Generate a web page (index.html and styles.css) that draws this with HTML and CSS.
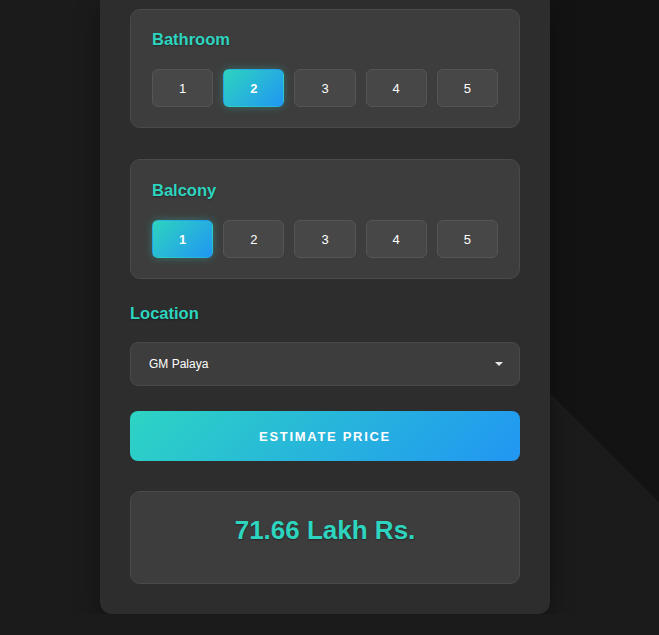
FILE: index.html
```html
<!DOCTYPE html>
<html lang="en">
<head>
<meta charset="utf-8">
<title>Price Estimator</title>
<link rel="stylesheet" href="styles.css">
</head>
<body>
<main class="card">
  <section class="group-box gap-lg">
    <h3 class="label">Bathroom</h3>
    <div class="options">
      <button class="opt">1</button>
      <button class="opt active">2</button>
      <button class="opt">3</button>
      <button class="opt">4</button>
      <button class="opt">5</button>
    </div>
  </section>
  <section class="group-box group-second gap-md">
    <h3 class="label">Balcony</h3>
    <div class="options">
      <button class="opt active">1</button>
      <button class="opt">2</button>
      <button class="opt">3</button>
      <button class="opt">4</button>
      <button class="opt">5</button>
    </div>
  </section>
  <section class="location">
    <h3 class="label">Location</h3>
    <div class="select-wrap">
      <div class="select">GM Palaya</div>
      <span class="caret"></span>
    </div>
  </section>
  <button class="estimate">ESTIMATE PRICE</button>
  <div class="result">
    <h2 class="price">71.66 Lakh Rs.</h2>
  </div>
</main>
</body>
</html>
```

FILE: styles.css
```css
html {
  height: 100%;
  background: linear-gradient(45deg, #1b1b1b 61.2%, #131313 61.2%);
}
body {
  margin: 0;
  font-family: "Liberation Sans", Arial, sans-serif;
  color: #fff;
}
.card {
  width: 450px;
  box-sizing: border-box;
  margin-left: 100px;
  padding: 9px 30px 30px;
  background: #2d2d2d;
  border-radius: 0 0 12px 12px;
  box-shadow: 0 8px 24px rgba(0, 0, 0, 0.35);
  display: flex;
  flex-direction: column;
}
.group-box {
  background: #3d3d3d;
  border: 1px solid #4a4a4a;
  border-radius: 10px;
  padding: 20px 21px;
}
.group-second {
  padding-top: 21px;
}
.gap-lg { margin-bottom: 31px; }
.gap-md { margin-bottom: 25px; }
.label {
  margin: 0 0 20px;
  font-size: 16.5px;
  font-weight: 700;
  line-height: 19px;
  color: #2dd4bf;
  text-shadow: 0 1px 2px rgba(0, 0, 0, 0.35);
}
.options {
  display: flex;
  gap: 10px;
}
.opt {
  flex: 1;
  height: 38px;
  padding: 0;
  background: #474747;
  border: 1px solid #555;
  border-radius: 6px;
  color: #fff;
  font-family: "Liberation Sans", Arial, sans-serif;
  font-size: 13px;
  font-weight: 400;
}
.opt.active {
  background: linear-gradient(135deg, #2dd4bf, #2196f3);
  border-color: transparent;
  font-weight: 700;
  box-shadow: 0 0 8px rgba(45, 212, 191, 0.35);
}
.location .label {
  margin-bottom: 19px;
}
.select-wrap {
  position: relative;
  margin-bottom: 25px;
}
.select {
  height: 44px;
  box-sizing: border-box;
  padding: 0 18px;
  display: flex;
  align-items: center;
  background: #3d3d3d;
  border: 1px solid #4a4a4a;
  border-radius: 8px;
  font-size: 12px;
  color: #fff;
}
.caret {
  position: absolute;
  right: 17px;
  top: 20px;
  width: 0;
  height: 0;
  border-left: 4px solid transparent;
  border-right: 4px solid transparent;
  border-top: 4px solid #e6e6e6;
}
.estimate {
  height: 50px;
  margin-bottom: 30px;
  border: none;
  border-radius: 8px;
  background: linear-gradient(135deg, #2dd4c3, #2196f3);
  color: #fff;
  font-family: "Liberation Sans", Arial, sans-serif;
  font-size: 13px;
  font-weight: 700;
  letter-spacing: 1.7px;
}
.result {
  background: #3d3d3d;
  border: 1px solid #4a4a4a;
  border-radius: 10px;
  padding: 23px 20px 38px;
  text-align: center;
}
.price {
  margin: 0;
  font-size: 26px;
  line-height: 30px;
  font-weight: 700;
  color: #2dd4bf;
  text-shadow: 0 1px 2px rgba(0, 0, 0, 0.35);
}
```
